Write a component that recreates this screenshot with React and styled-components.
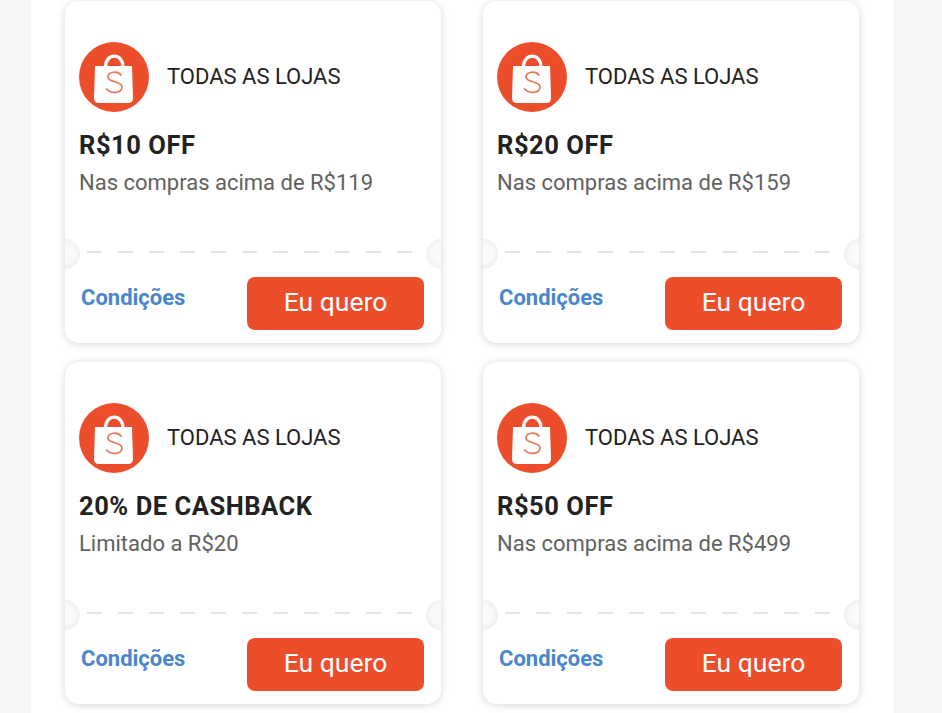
import React from "react";
import styled, { createGlobalStyle } from "styled-components";

const GlobalStyle = createGlobalStyle`
  html, body {
    margin: 0;
    padding: 0;
    height: 100%;
    overflow: hidden;
    background: #f5f5f5;
    font-family: Roboto, "Liberation Sans", sans-serif;
  }
`;

const Page = styled.div`
  width: 862px;
  min-height: 100vh;
  margin-left: 31px;
  padding: 1px 34px 0;
  box-sizing: border-box;
  background: #fff;
`;

const Grid = styled.div`
  display: grid;
  grid-template-columns: repeat(2, 376px);
  column-gap: 42px;
  row-gap: 19px;
`;

const Card = styled.div`
  position: relative;
  height: 342px;
  display: flex;
  flex-direction: column;
  background: #fff;
  border-radius: 14px;
  box-shadow: 0 1px 8px rgba(0, 0, 0, 0.17);
`;

const Body = styled.div`
  flex: 1;
  padding: 41px 14px 0;
`;

const Store = styled.div`
  display: flex;
  align-items: center;
  gap: 18px;
  margin-bottom: 17px;
`;

const StoreName = styled.span`
  position: relative;
  top: -1px;
  font-size: 22px;
  color: #222;
`;

const Title = styled.div`
  font-size: 25.5px;
  line-height: 32px;
  font-weight: 700;
  letter-spacing: 0.55px;
  color: #222;
`;

const Subtitle = styled.div`
  margin-top: 7px;
  font-size: 22px;
  line-height: 30px;
  color: #616161;
`;

const Divider = styled.div`
  height: 2px;
  margin: 0 29px 0 22px;
  background: repeating-linear-gradient(to right, #e4e4e4 0 15px, transparent 15px 31px);
`;

const Notch = styled.div`
  position: absolute;
  top: 238px;
  ${(p) => (p.$side === "left" ? "left: 0;" : "right: 0;")}
  width: 15px;
  height: 30px;
  overflow: hidden;

  &::before {
    content: "";
    position: absolute;
    top: 0;
    ${(p) => (p.$side === "left" ? "left: -15px;" : "right: -15px;")}
    width: 30px;
    height: 30px;
    border-radius: 50%;
    background: #f9f9f9;
    box-shadow: inset 0 0 7px rgba(0, 0, 0, 0.08);
  }
`;

const Footer = styled.div`
  display: flex;
  justify-content: space-between;
  align-items: flex-start;
  padding: 24px 17px 13px 16px;
`;

const TermsLink = styled.a`
  margin-top: 8px;
  font-size: 22px;
  line-height: 26px;
  font-weight: 700;
  color: #4a86cb;
`;

const ClaimButton = styled.button`
  width: 177px;
  height: 53px;
  padding: 0 0 4px;
  border: none;
  border-radius: 8px;
  background: #ec4e2b;
  color: #fff;
  font-family: inherit;
  font-size: 26.5px;
`;

const ShopeeLogo = () => (
  <svg width="70" height="70" viewBox="0 0 70 70">
    <circle cx="35" cy="35" r="35" fill="#ec4e2b" />
    <path
      d="M16 24 H53 L54 56 Q54 61 49 61 H20 Q15 61 15 56 Z"
      fill="#fff"
    />
    <path d="M26.5 25 C26.5 10.5 44 10.5 44 25" fill="none" stroke="#fff" strokeWidth="3.2" />
    <path
      d="M42 33 C38.5 28.5 29 29.5 29 35 C29 41 43 38.5 43 45 C43 51.5 32 52 27.5 47"
      fill="none"
      stroke="#e8765c"
      strokeWidth="1.7"
      strokeLinecap="round"
    />
  </svg>
);

const coupons = [
  { title: "R$10 OFF", subtitle: "Nas compras acima de R$119" },
  { title: "R$20 OFF", subtitle: "Nas compras acima de R$159" },
  { title: "20% DE CASHBACK", subtitle: "Limitado a R$20" },
  { title: "R$50 OFF", subtitle: "Nas compras acima de R$499" },
];

const App = () => {
  return (
    <Page>
      <GlobalStyle />
      <Grid>
        {coupons.map((coupon) => (
          <Card key={coupon.title}>
            <Body>
              <Store>
                <ShopeeLogo />
                <StoreName>TODAS AS LOJAS</StoreName>
              </Store>
              <Title>{coupon.title}</Title>
              <Subtitle>{coupon.subtitle}</Subtitle>
            </Body>
            <Notch $side="left" />
            <Notch $side="right" />
            <Divider />
            <Footer>
              <TermsLink>Condições</TermsLink>
              <ClaimButton>Eu quero</ClaimButton>
            </Footer>
          </Card>
        ))}
      </Grid>
    </Page>
  );
};

export default App;
